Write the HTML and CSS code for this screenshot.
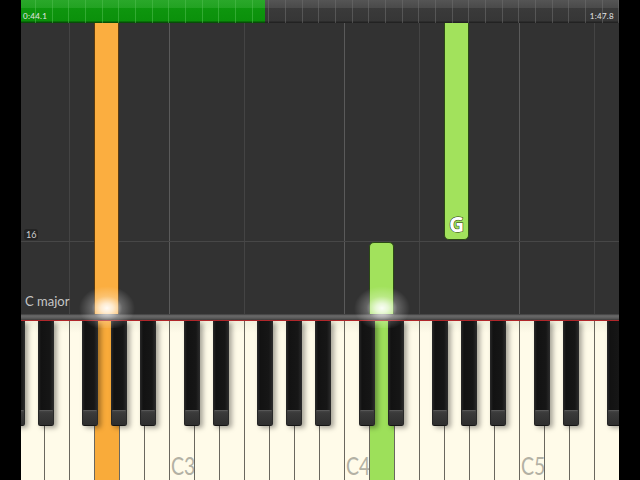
FILE: index.html
```html
<!DOCTYPE html>
<html>
<head>
<meta charset="utf-8">
<link rel="stylesheet" href="styles.css">
</head>
<body>
<div class="screen">
  <div class="progress">
    <div class="done"></div>
    <span class="time">0:44.1</span>
    <span class="time">1:47.8</span>
  </div>
  <div class="roll">
    <span class="measure">16</span>
    <span class="key-sig">C major</span>
    <div class="note orange n-g2"></div>
    <div class="note green n-d4"></div>
    <div class="note green n-g4"><span class="letter">G</span></div>
    <div class="glow glow-g2"></div>
    <div class="glow glow-d4"></div>
  </div>
  <div class="strip"></div>
  <div class="keyboard">
    <div class="keys">
      <div class="wk"><i class="bk cs"></i></div>
      <div class="wk"><i class="bk ds"></i></div>
      <div class="wk"></div>
      <div class="wk hl-orange"><i class="bk fs"></i></div>
      <div class="wk"><i class="bk gs"></i></div>
      <div class="wk"><i class="bk as"></i></div>
      <div class="wk"><span class="label">C3</span></div>
      <div class="wk"><i class="bk cs"></i></div>
      <div class="wk"><i class="bk ds"></i></div>
      <div class="wk"></div>
      <div class="wk"><i class="bk fs"></i></div>
      <div class="wk"><i class="bk gs"></i></div>
      <div class="wk"><i class="bk as"></i></div>
      <div class="wk"><span class="label">C4</span></div>
      <div class="wk hl-green"><i class="bk cs"></i></div>
      <div class="wk"><i class="bk ds"></i></div>
      <div class="wk"></div>
      <div class="wk"><i class="bk fs"></i></div>
      <div class="wk"><i class="bk gs"></i></div>
      <div class="wk"><i class="bk as"></i></div>
      <div class="wk"><span class="label">C5</span></div>
      <div class="wk"><i class="bk cs"></i></div>
      <div class="wk"><i class="bk ds"></i></div>
      <div class="wk"></div>
      <div class="wk"><i class="bk fs"></i></div>
    </div>
  </div>
</div>
</body>
</html>
```

FILE: styles.css
```css
html, body {
  margin: 0;
  padding: 0;
  background: #000;
}

.screen {
  width: 640px;
  height: 480px;
  box-sizing: border-box;
  padding: 0 21px;
  display: flex;
  flex-direction: column;
  background: #000;
  font-family: "Lato", "Open Sans", sans-serif;
  overflow: hidden;
}

/* progress bar */
.progress {
  position: relative;
  height: 23px;
  flex: none;
  display: flex;
  justify-content: space-between;
  align-items: flex-end;
  padding: 0 5px 3px 2px;
  box-sizing: border-box;
  background:
    repeating-linear-gradient(90deg, rgba(110,110,110,0.55) 0 1px, transparent 1px 16.667px) 14px 0 / auto 100% no-repeat,
    linear-gradient(#555 0, #4a4a4a 8px, #3a3a3a 8px, #363636 21px, #222 22px, #222 23px);
  background-repeat: repeat-y, no-repeat;
}

.done {
  position: absolute;
  left: 0;
  top: 0;
  width: 244px;
  height: 100%;
  background:
    repeating-linear-gradient(90deg, rgba(80,190,80,0.55) 0 1px, transparent 1px 16.667px) 14px 0 / auto 100%,
    linear-gradient(#2aa82a 0, #22a222 8px, #0e960e 8px, #0b900b 21px, #064f06 22px, #064f06 23px);
  background-repeat: repeat-y, no-repeat;
}

.time {
  position: relative;
  color: #e6e6e6;
  font-size: 8px;
  line-height: 8px;
  letter-spacing: 0.3px;
}

/* falling notes area */
.roll {
  position: relative;
  height: 291px;
  flex: none;
  background:
    linear-gradient(to bottom, transparent 218px, #474747 218px, #474747 219px, transparent 219px),
    repeating-linear-gradient(90deg, #5a5a5a 0 1px, transparent 1px 175px) 148px 0 / auto 100%,
    repeating-linear-gradient(90deg, #444 0 1px, transparent 1px 175px) 48px 0 / auto 100%,
    #323232;
}

.measure {
  position: absolute;
  left: 3px;
  top: 206px;
  padding: 1px 2px;
  border-radius: 3px;
  background: #242424;
  color: #cfcfcf;
  font-size: 9px;
  line-height: 9px;
}

.key-sig {
  position: absolute;
  left: 4px;
  top: 271px;
  color: #c6c6c6;
  font-size: 13px;
  line-height: 15px;
}

.note {
  position: absolute;
  width: 25px;
  box-sizing: border-box;
}

.orange {
  background: #fbae40;
  border: 1px solid #5a3a10;
  border-top: none;
  border-bottom: none;
}

.green {
  background: #a2e25c;
  border: 1px solid #2b4a14;
}

.n-g2 {
  left: 73px;
  top: 0;
  bottom: 0;
}

.n-d4 {
  left: 348px;
  top: 219px;
  bottom: 0;
  border-bottom: none;
  border-radius: 5px 5px 0 0;
}

.n-g4 {
  left: 423px;
  top: 0;
  height: 217px;
  border-top: none;
  border-radius: 0 0 5px 5px;
  display: flex;
  align-items: flex-end;
  justify-content: center;
  padding-bottom: 4px;
}

.letter {
  font-family: "Open Sans", "Lato", sans-serif;
  font-weight: 700;
  font-size: 21px;
  line-height: 21px;
  color: #fff;
  -webkit-text-stroke: 1px #1a2a10;
  paint-order: stroke fill;
}

.glow {
  position: absolute;
  z-index: 3;
  width: 56px;
  height: 44px;
  bottom: -14px;
  background: radial-gradient(ellipse 50% 50% at 50% 55%, rgba(255,255,255,0.95) 0, rgba(255,255,255,0.75) 22%, rgba(255,255,255,0.25) 55%, rgba(255,255,255,0) 100%);
  pointer-events: none;
}

.glow-g2 { left: 58px; }
.glow-d4 { left: 333px; }

.strip {
  height: 6px;
  flex: none;
  background: linear-gradient(#3a3a3a, #6a6a6a 30%, #5a5a5a 70%, #3c3c3c);
}

/* keyboard */
.keyboard {
  flex: 1;
  border-top: 1px solid #b0262a;
  overflow: hidden;
  background: #fdfae6;
}

.keys {
  display: flex;
  height: 100%;
  margin-left: -2px;
}

.wk {
  position: relative;
  flex: none;
  width: 25px;
  height: 100%;
  box-sizing: border-box;
  border-left: 1px solid #6a675e;
  background: linear-gradient(#f2efdc, #fffbe9 12px, #fffbe9);
}

.hl-orange { background: #f9ab3a; }
.hl-green { background: #9de05a; }

.bk {
  position: absolute;
  top: 0;
  width: 16px;
  height: 105px;
  z-index: 1;
  box-sizing: border-box;
  border-radius: 0 0 2px 2px;
  background: linear-gradient(90deg, #2a2a2a 0, #121212 3px, #161616 12px, #2c2c2c 16px);
  box-shadow: 3px 2px 5px rgba(0,0,0,0.35);
}

.bk::after {
  content: "";
  position: absolute;
  left: 1px;
  right: 1px;
  bottom: 1px;
  height: 15px;
  border-radius: 1px;
  background: linear-gradient(#6a6a6a 0, #444 1px, #3a3a3a 3px, #2e2e2e 15px);
}

.bk.cs { left: -11px; }
.bk.ds { left: -7px; }
.bk.fs { left: -13px; }
.bk.gs { left: -9px; }
.bk.as { left: -5px; }

.label {
  position: absolute;
  left: 1px;
  bottom: 2px;
  font-family: "Lato", "Open Sans", sans-serif;
  font-size: 25px;
  line-height: 25px;
  color: #b3b1a4;
  transform: scaleX(0.78);
  transform-origin: left bottom;
}
```
